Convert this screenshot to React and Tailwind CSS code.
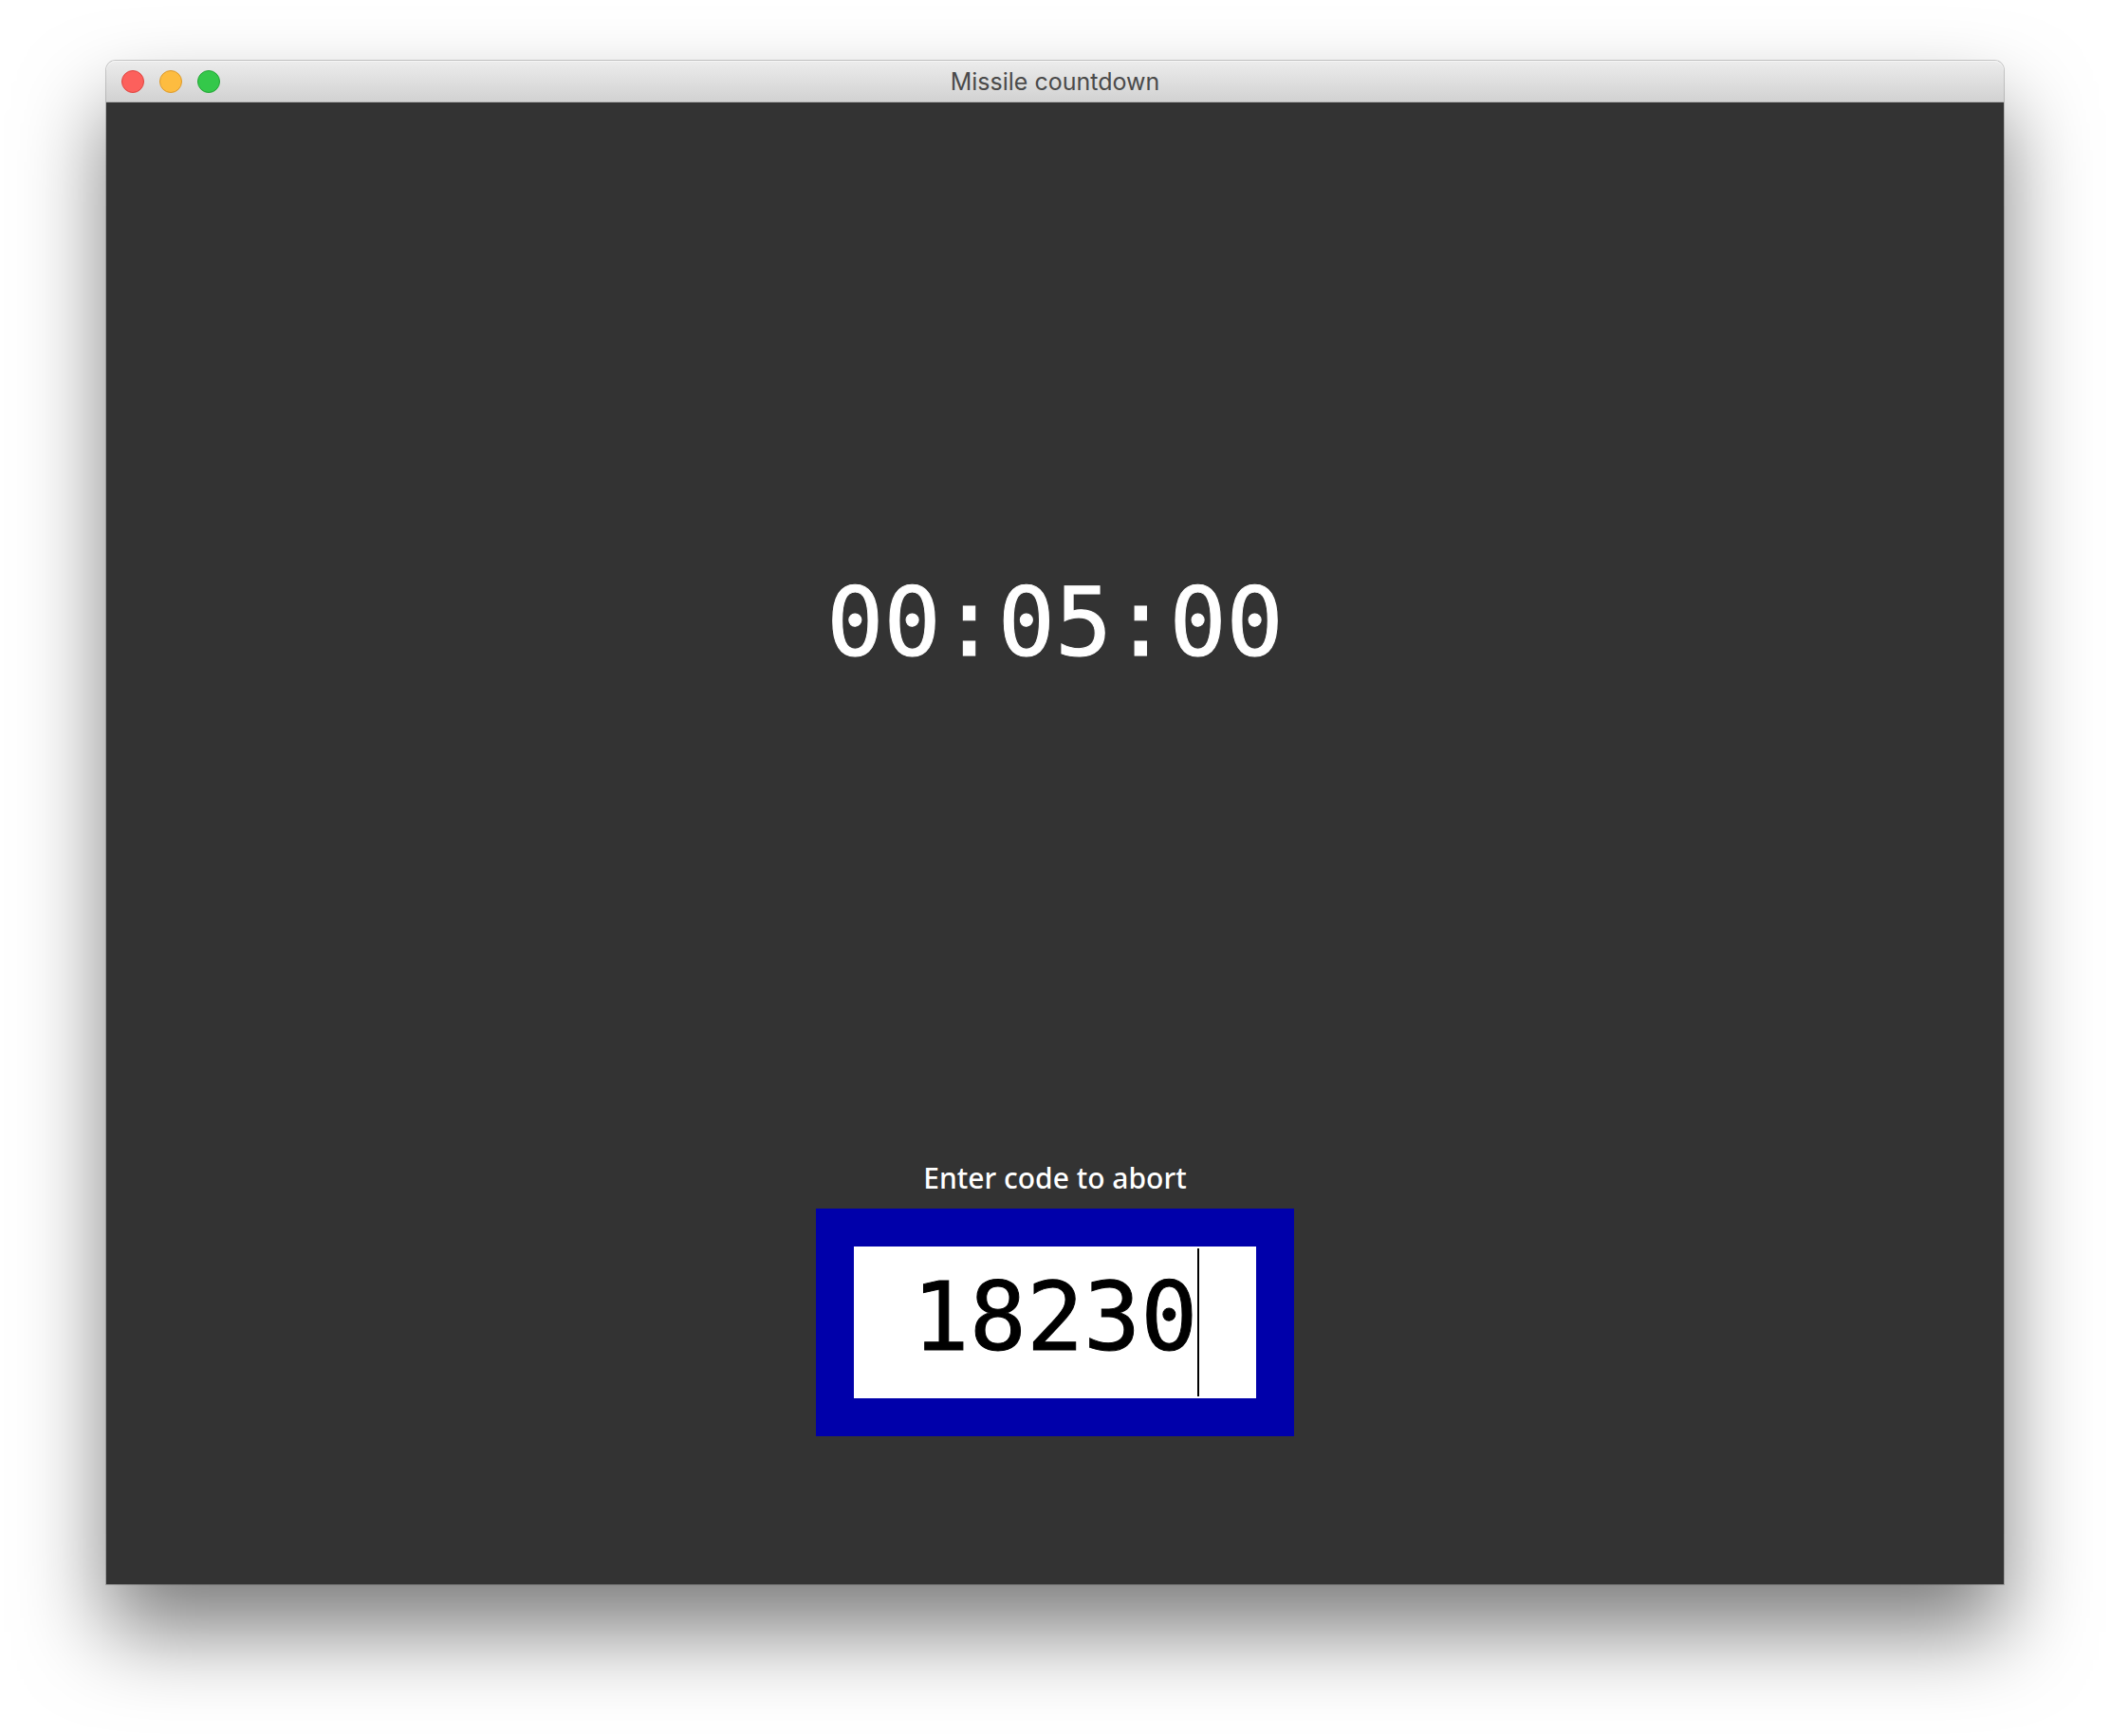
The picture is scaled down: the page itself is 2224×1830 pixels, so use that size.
import { useState } from "react";

const controls = [
  { label: "Close", style: "bg-[#fc605c] border-[#e0443f]" },
  { label: "Minimise", style: "bg-[#fdbc40] border-[#dd9a2b]" },
  { label: "Zoom", style: "bg-[#34c84a] border-[#24a536]" },
];

const digits =
  "font-['DejaVu_Sans_Mono',monospace] text-[100px] leading-[120px] [-webkit-text-stroke:1px_currentColor]";

function TitleBar() {
  return (
    <header className="grid h-11 grid-cols-[1fr_auto_1fr] items-center rounded-t-[10px] border-b border-[#b4b4b4] bg-linear-to-b from-[#ececec] to-[#d2d2d2] px-4 pt-px shadow-[inset_0_1px_0_#f5f5f5]">
      <div className="flex gap-4">
        {controls.map(({ label, style }) => (
          <button
            key={label}
            type="button"
            aria-label={label}
            className={`size-6 rounded-full border ${style}`}
          />
        ))}
      </div>
      <h1 className="font-['Inter',sans-serif] text-[25px] leading-8 text-[#4a4a4a]">
        Missile countdown
      </h1>
    </header>
  );
}

export default function App() {
  const [code, setCode] = useState("18230");

  return (
    <div className="flex min-h-screen flex-col bg-white px-28 pt-16 pb-40">
      <div className="flex flex-1 flex-col rounded-t-[10px] shadow-[0_0_0_1px_rgba(0,0,0,0.2),0_50px_90px_rgba(0,0,0,0.51)]">
        <TitleBar />
        <main className="flex flex-1 flex-col items-center bg-[#333333] pb-39">
          <div className="flex flex-1 items-center pb-4">
            <time className={`${digits} text-white`}>00:05:00</time>
          </div>
          <form
            className="flex flex-col items-center"
            onSubmit={(event) => event.preventDefault()}
          >
            <label
              htmlFor="abort-code"
              className="pb-3 font-['Noto_Sans',sans-serif] text-[30px] leading-10 font-medium text-white"
            >
              Enter code to abort
            </label>
            <div className="bg-[#0000aa] p-10">
              <div className="relative flex">
                <input
                  id="abort-code"
                  value={code}
                  onChange={(event) => setCode(event.target.value)}
                  className={`${digits} h-40 w-106 bg-white pb-3 text-center text-black caret-transparent outline-none`}
                />
                <span
                  aria-hidden="true"
                  className="pointer-events-none absolute inset-y-0.5 right-15 w-0.5 bg-black"
                />
              </div>
            </div>
          </form>
        </main>
      </div>
    </div>
  );
}
